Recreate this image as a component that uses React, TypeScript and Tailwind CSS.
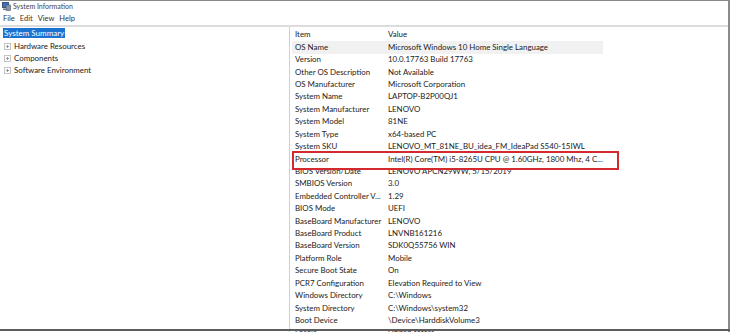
import React from "react"

const rows: [string, string][] = [
    ["OS Name", "Microsoft Windows 10 Home Single Language"],
    ["Version", "10.0.17763 Build 17763"],
    ["Other OS Description", "Not Available"],
    ["OS Manufacturer", "Microsoft Corporation"],
    ["System Name", "LAPTOP-B2P00QJ1"],
    ["System Manufacturer", "LENOVO"],
    ["System Model", "81NE"],
    ["System Type", "x64-based PC"],
    ["System SKU", "LENOVO_MT_81NE_BU_idea_FM_IdeaPad S540-15IWL"],
    ["Processor", "Intel(R) Core(TM) i5-8265U CPU @ 1.60GHz, 1800 Mhz, 4 C..."],
    ["BIOS Version/Date", "LENOVO APCN29WW, 5/15/2019"],
    ["SMBIOS Version", "3.0"],
    ["Embedded Controller V...", "1.29"],
    ["BIOS Mode", "UEFI"],
    ["BaseBoard Manufacturer", "LENOVO"],
    ["BaseBoard Product", "LNVNB161216"],
    ["BaseBoard Version", "SDK0Q55756 WIN"],
    ["Platform Role", "Mobile"],
    ["Secure Boot State", "On"],
    ["PCR7 Configuration", "Elevation Required to View"],
    ["Windows Directory", "C:\\Windows"],
    ["System Directory", "C:\\Windows\\system32"],
    ["Boot Device", "\\Device\\HarddiskVolume3"],
    ["Locale", "United States"],
]

// little computer glyph from the title bar
function AppIcon() {
    return (
        <svg width="9" height="9" viewBox="0 0 9 9">
            <rect x="0.5" y="0.5" width="6" height="5" fill="#3a6fc4" stroke="#2a3d66" strokeWidth="0.8" />
            <rect x="4" y="3" width="4.5" height="5.5" fill="#8a96a8" stroke="#4a5566" strokeWidth="0.6" />
            <rect x="1" y="6.5" width="3" height="1.5" fill="#6a7484" />
        </svg>
    )
}

function PlusBox() {
    return (
        <span className="relative inline-block w-[7px] h-[7px] border border-[#c4c4c4] mr-[3px] shrink-0">
            <span className="absolute left-[1px] top-[2px] w-[3px] h-px bg-[#9a9a9a]" />
            <span className="absolute left-[2px] top-[1px] w-px h-[3px] bg-[#9a9a9a]" />
        </span>
    )
}

function Row({ item, value, shaded }: { item: string, value: string, shaded?: boolean }) {
    return (
        <div className={`flex items-center h-[12.43px] whitespace-nowrap ${shaded ? "bg-[#f1f1f1]" : ""}`}>
            <span className="w-[96px] pl-[3px] shrink-0">{item}</span>
            <span>{value}</span>
        </div>
    )
}

export default function App() {
    return (
        <div
            className="relative w-[730px] h-[332px] overflow-hidden bg-white text-[#222] border-t border-[#8a8a8a]"
            style={{ fontFamily: 'Lato, "Open Sans", sans-serif' }}
        >
            {/* title bar */}
            <div className="flex items-center h-[11px] pl-[2px] gap-[2px] text-[7px] text-[#444]">
                <AppIcon />
                <span>System Information</span>
            </div>
            {/* menu */}
            <div className="flex items-center h-[13px] pl-[3px] gap-[5px] text-[7.5px] text-[#333]">
                <span>File</span>
                <span>Edit</span>
                <span>View</span>
                <span>Help</span>
            </div>
            <div className="h-[2px] bg-[#dcdcdc]" />

            <div className="flex text-[7.9px]">
                {/* tree pane */}
                <div className="w-[290px] h-[305px] border-r border-[#d0d0d0] pt-[1px] pl-[3px]">
                    <div className="inline-flex items-center h-[10px] px-px bg-[#1a73d0] text-white text-[8px]">
                        System Summary
                    </div>
                    <div className="flex flex-col text-[7.9px] pl-px mt-[1px]">
                        {["Hardware Resources", "Components", "Software Environment"].map(t => (
                            <div key={t} className="flex items-center h-[12px]">
                                <PlusBox />
                                <span>{t}</span>
                            </div>
                        ))}
                    </div>
                </div>

                {/* list pane */}
                <div className="relative flex-1 pl-[2px] pt-[2px]">
                    <div className="w-[311px]">
                        <Row item="Item" value="Value" />
                        {rows.map(([item, value], i) => (
                            <Row key={item} item={item} value={value} shaded={i === 0} />
                        ))}
                    </div>
                    {/* highlight box round the processor row */}
                    <div className="absolute left-[2px] top-[124px] w-[327px] h-[19px] border-2 border-[#d42a2f]" />
                </div>
            </div>

            {/* frame edges */}
            <div className="absolute right-0 top-0 w-[2px] h-full bg-[#8a8a8a]" />
            <div className="absolute left-0 top-[328px] w-full h-[2px] bg-[#5c5c5c]" />
        </div>
    )
}
